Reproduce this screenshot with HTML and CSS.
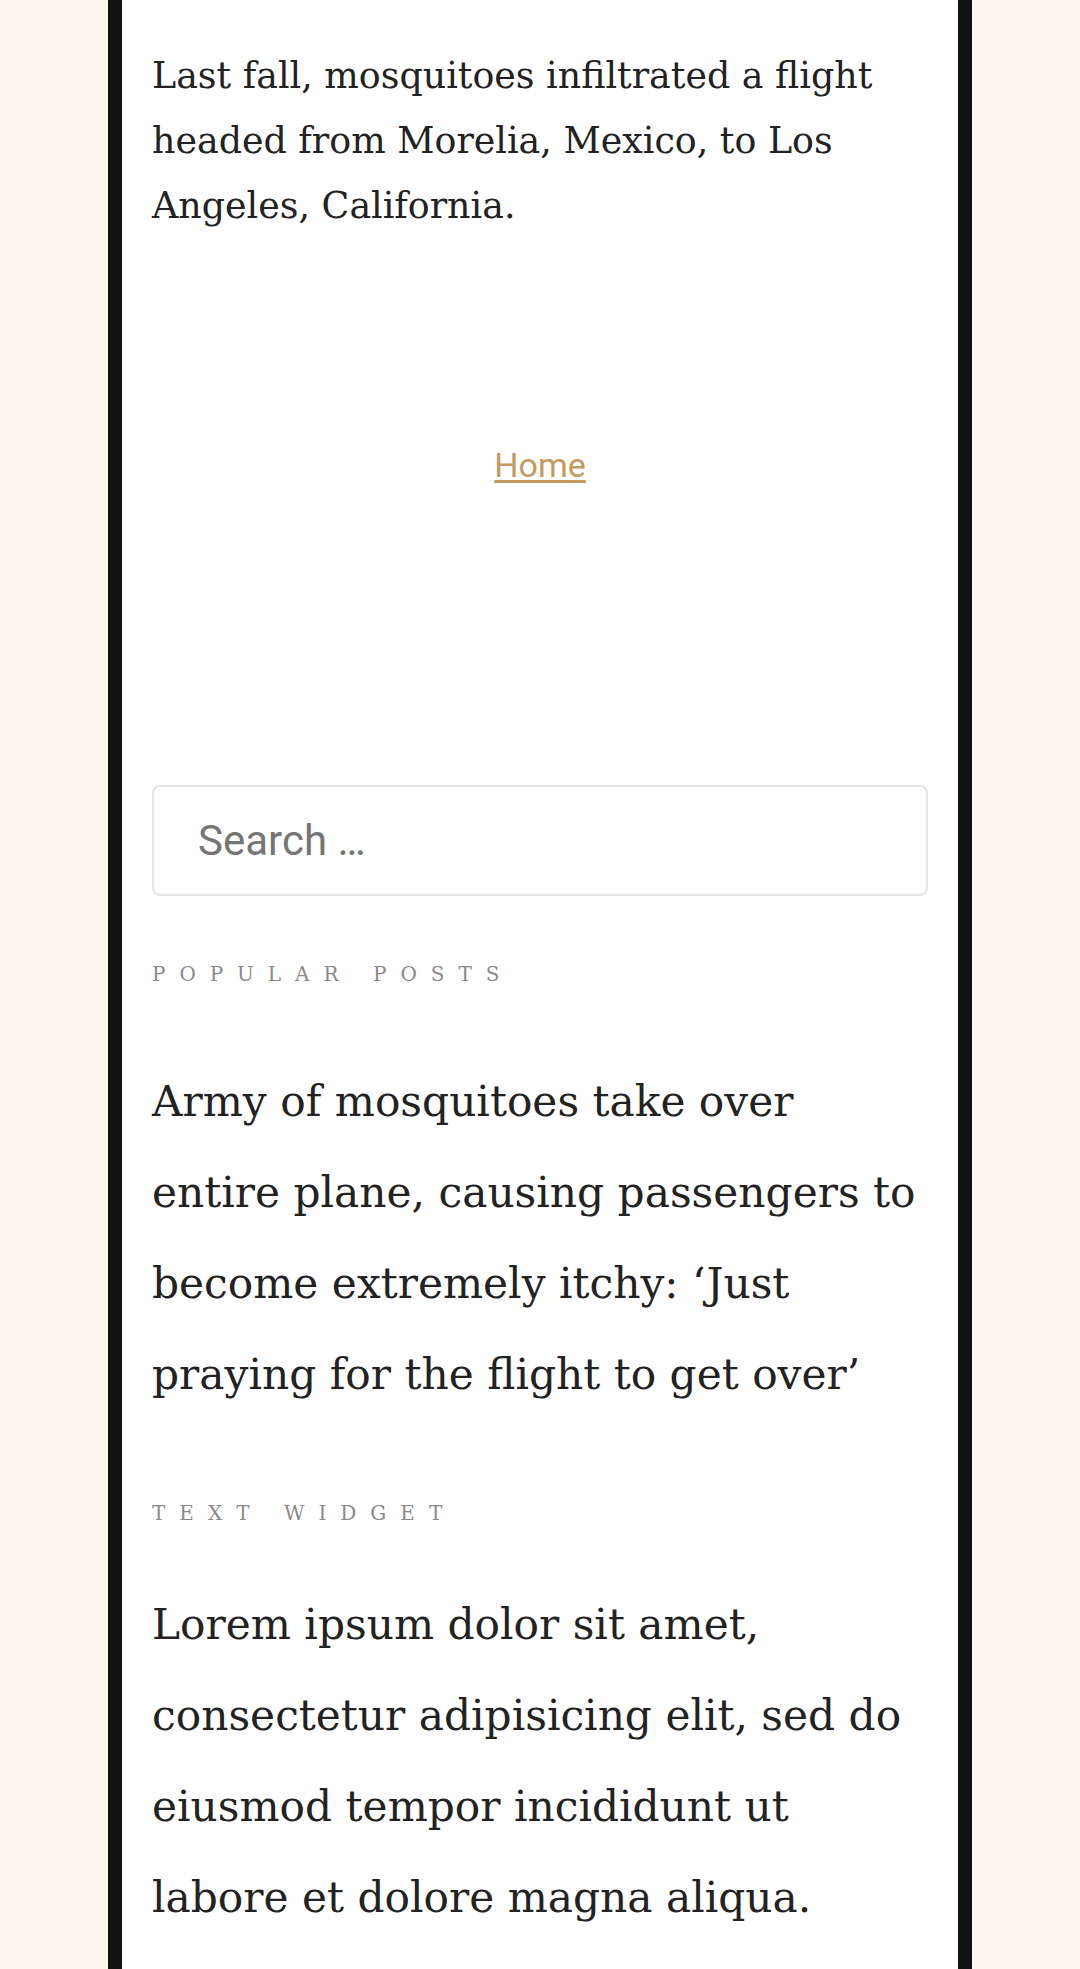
FILE: index.html
```html
<!DOCTYPE html>
<html lang="en">
<head>
<meta charset="utf-8">
<title>Mosquitoes</title>
<link rel="stylesheet" href="styles.css">
</head>
<body>
<div class="page">
  <article class="entry">
    <p>Last fall, mosquitoes infiltrated a flight headed from Morelia, Mexico, to Los Angeles, California.</p>
  </article>
  <nav class="crumbs"><a href="#">Home</a></nav>
  <aside class="sidebar">
    <form class="search" action="#">
      <input class="search-field" type="search" placeholder="Search …">
    </form>
    <section class="widget">
      <h2 class="widget-title">Popular Posts</h2>
      <ul class="posts">
        <li><a href="#">Army of mosquitoes take over entire plane, causing passengers to become extremely itchy: ‘Just praying for the flight to get over’</a></li>
      </ul>
    </section>
    <section class="widget">
      <h2 class="widget-title">Text Widget</h2>
      <p class="widget-text">Lorem ipsum dolor sit amet, consectetur adipisicing elit, sed do eiusmod tempor incididunt ut labore et dolore magna aliqua.</p>
    </section>
  </aside>
</div>
</body>
</html>
```

FILE: styles.css
```css
html, body {
  margin: 0;
  padding: 0;
  background: #fdf9ef;
}
body {
  font-family: "DejaVu Serif", serif;
  color: #222;
}
.page {
  width: 776px;
  margin: 0 auto;
  padding: 43px 30px 60px;
  background: #fff;
  border-left: 14px solid #111;
  border-right: 14px solid #111;
  min-height: 1900px;
}
.entry p {
  margin: 0;
  font-size: 36.4px;
  line-height: 65px;
}
.crumbs {
  margin-top: 207px;
  text-align: center;
  font-family: Roboto, "Liberation Sans", sans-serif;
  font-size: 34px;
  line-height: 40px;
}
.crumbs a {
  color: #c49a5e;
  text-decoration: underline;
  text-underline-offset: 3px;
}
.sidebar {
  margin-top: 300px;
}
.search {
  margin: 0;
}
.search-field {
  display: block;
  box-sizing: border-box;
  width: 100%;
  height: 111px;
  margin: 0;
  padding: 0 44px;
  border: 2px solid #e6e6e6;
  border-radius: 8px;
  font-family: Roboto, "Liberation Sans", sans-serif;
  font-size: 42px;
  color: #333;
  background: #fff;
  outline: none;
  -webkit-appearance: none;
}
.search-field::placeholder {
  color: #757575;
}
.widget {
  margin-top: 66px;
}
.widget + .widget {
  margin-top: 81px;
}
.widget-title {
  margin: 0;
  font-size: 20px;
  font-weight: normal;
  line-height: 24px;
  letter-spacing: 14px;
  text-transform: uppercase;
  color: #8a8a8a;
}
.posts {
  list-style: none;
  margin: 70px 0 0;
  padding: 0;
}
.posts a {
  color: #222;
  text-decoration: none;
}
.posts li, .widget-text {
  font-size: 42.3px;
  line-height: 91px;
}
.widget-text {
  margin: 54px 0 0;
}
```
